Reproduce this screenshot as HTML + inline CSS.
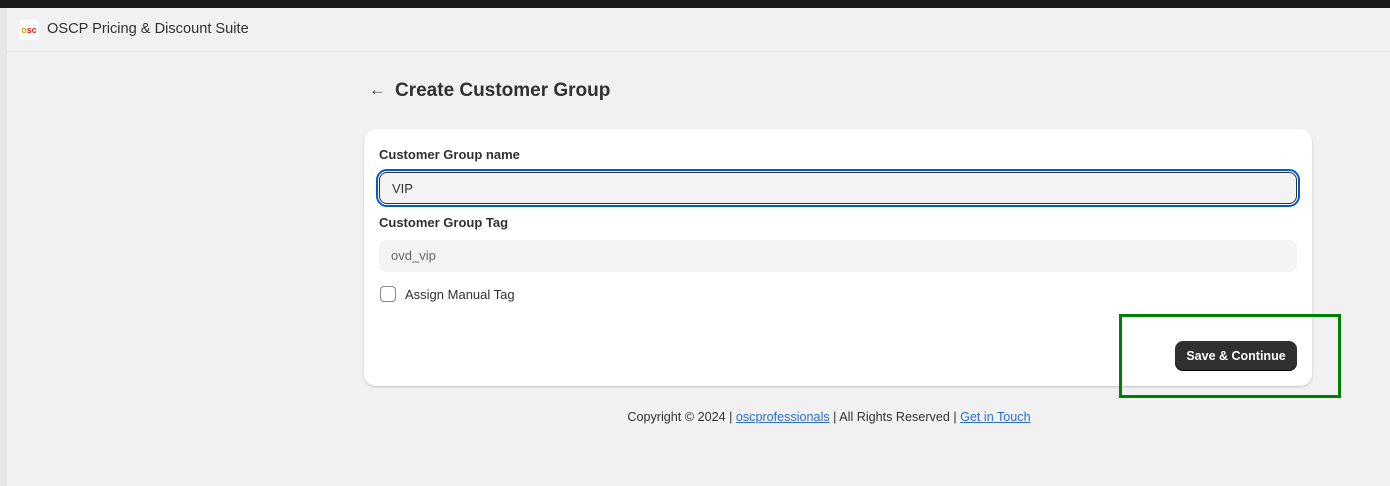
<!DOCTYPE html>
<html><head><style>
body{margin:0;width:1390px;height:486px;background:#f1f1f1;font-family:"Liberation Sans",sans-serif;position:relative;overflow:hidden;color:#303030}
.top{position:absolute;left:0;top:0;width:1390px;height:8px;background:#1a1a1a}
.side{position:absolute;left:0;top:8px;width:7px;height:478px;background:#e6e6e6}
.hdr{position:absolute;left:7px;top:8px;right:0;height:43px;border-bottom:1px solid #e3e3e3}
.logo{position:absolute;left:12px;top:12px;width:20px;height:20px;background:#fff;border-radius:3px;font-size:9px;font-weight:bold;line-height:20px;text-align:center;color:#d22}
.title{position:absolute;left:40px;top:13px;font-size:14.6px;color:#303030}
.h1{position:absolute;left:369px;top:80px;font-size:19px;font-weight:bold;color:#303030}
.card{position:absolute;left:364px;top:129px;width:948px;height:257px;background:#fff;border-radius:12px;box-shadow:0 1px 2px rgba(0,0,0,.2)}
.lbl{position:absolute;left:15px;font-size:13px;font-weight:bold;color:#303030}
.inp{position:absolute;left:15px;width:918px;height:32px;border-radius:8px;background:#f3f3f3;font-size:13px;box-sizing:border-box;padding-left:12px;line-height:32px}
.btn{position:absolute;left:811px;top:212px;width:122px;height:30px;background:#303030;border-radius:8px;color:#fff;font-size:12.5px;font-weight:bold;text-align:center;line-height:30px;box-shadow:inset 0 -1px 0 #000}
.green{position:absolute;left:1119px;top:314px;width:216px;height:78px;border:3px solid #008000}
.foot{position:absolute;left:0;width:1658px;top:410px;text-align:center;font-size:12.6px;color:#303030}
.foot a{color:#2c6ecb;text-decoration:underline}
</style></head><body>
<div class="top"></div><div class="side"></div>
<div class="hdr"><div class="logo"><span style="color:#e8a000">o</span>sc</div><div class="title">OSCP Pricing &amp; Discount Suite</div></div>
<div style="position:absolute;left:369px;top:80px;font-size:17px;color:#444">←</div>
<div class="h1" style="left:395px">Create Customer Group</div>
<div class="card">
<div class="lbl" style="top:18px">Customer Group name</div>
<div class="inp" style="top:43px;border:1px solid #303030;outline:2px solid #005bd3;outline-offset:1px;color:#303030">VIP</div>
<div class="lbl" style="top:86px">Customer Group Tag</div>
<div class="inp" style="top:111px;color:#666">ovd_vip</div>
<div style="position:absolute;left:16px;top:157px;width:14px;height:14px;border:1px solid #8a8a8a;border-radius:4px"></div>
<div style="position:absolute;left:41px;top:158px;font-size:13px">Assign Manual Tag</div>
<div class="btn">Save &amp; Continue</div>
</div>
<div class="green"></div>
<div class="foot">Copyright © 2024 | <a>oscprofessionals</a> | All Rights Reserved | <a>Get in Touch</a></div>
</body></html>
